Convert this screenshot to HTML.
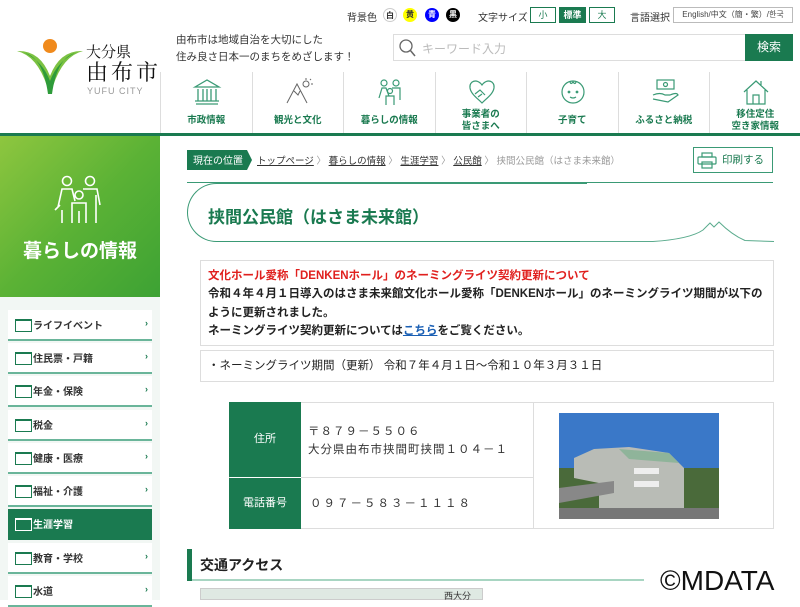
<!DOCTYPE html>
<html><head><meta charset="utf-8">
<style>
*{margin:0;padding:0;box-sizing:border-box}
body{width:800px;height:600px;overflow:hidden;position:relative;background:#fff;font-family:"Liberation Sans","Noto Sans CJK JP",sans-serif;color:#333}
.a{position:absolute}
.sm{font-size:10px;color:#333}
.circ{position:absolute;width:14px;height:14px;border-radius:50%;font-size:8px;line-height:14px;text-align:center;font-weight:bold}
.fbtn{position:absolute;top:7px;height:16px;border:1px solid #1a7a50;font-size:9px;line-height:14px;text-align:center;color:#1a7a50}
.nav{position:absolute;top:72px;height:61px;width:91.5px;border-left:1px solid #ddd;text-align:center}
.nav span{position:absolute;left:0;right:0;font-size:9.5px;font-weight:bold;color:#1a7a50;line-height:12px}
.nav svg{position:absolute;left:31px;top:6px}
.side{position:absolute;left:8px;width:144px;height:31px;background:#fff;border-bottom:2px solid #6ab59a;font-size:10px;font-weight:bold;color:#333}
.side .f{position:absolute;left:7px;top:9px;width:17px;height:13px;border:1px solid #1a7a50;border-top-width:2px}
.side .t{position:absolute;left:25px;top:7px}
.side .g{position:absolute;right:4px;top:8px;color:#1a7a50;font-size:9px}
.txt{font-size:11.5px;font-weight:bold;line-height:18.3px;color:#222}
</style></head><body>
<div class="a sm" style="left:347px;top:9px">背景色</div>
<div class="circ" style="left:383px;top:8px;border:1px solid #ccc;background:#fff">白</div>
<div class="circ" style="left:403px;top:8px;background:#ff0;color:#333">黄</div>
<div class="circ" style="left:425px;top:8px;background:#00f;color:#fff">青</div>
<div class="circ" style="left:446px;top:8px;background:#000;color:#fff">黒</div>
<div class="a sm" style="left:478px;top:9px">文字サイズ</div>
<div class="fbtn" style="left:530px;width:26px">小</div>
<div class="fbtn" style="left:559px;width:27px;background:#1a7a50;color:#fff;font-weight:bold">標準</div>
<div class="fbtn" style="left:589px;width:26px">大</div>
<div class="a sm" style="left:630px;top:9px">言語選択</div>
<div class="a" style="left:673px;top:7px;width:120px;height:16px;border:1px solid #bbb;font-size:8px;line-height:14px;text-align:center;color:#444">English/中文（簡・繁）/한국</div>
<svg class="a" style="left:15px;top:36px" width="70" height="62" viewBox="0 0 70 62">
<circle cx="35" cy="10" r="7" fill="#f08a1c"/>
<path d="M2 15 Q25 14 35 40 Q45 14 68 15 Q48 20 38 50 L32 50 Q22 20 2 15Z" fill="#7cc242"/>
<path d="M10 17 Q28 22 33 58 L37 58 Q42 22 60 17 Q42 26 35 45 Q28 26 10 17Z" fill="#2e9b3a"/>
</svg>
<div class="a" style="left:86px;top:43px;font-family:'Noto Serif CJK SC',serif;font-size:15px;line-height:17px;color:#111;white-space:nowrap">大分県</div>
<div class="a" style="left:86px;top:59px;font-family:'Noto Serif CJK SC',serif;font-size:22px;line-height:26px;letter-spacing:3px;color:#111;white-space:nowrap">由布市</div>
<div class="a" style="left:87px;top:86px;font-size:9px;color:#999;letter-spacing:1px">YUFU CITY</div>
<div class="a" style="left:176px;top:32px;font-size:10.5px;line-height:17px;color:#333">由布市は地域自治を大切にした<br>住み良さ日本一のまちをめざします！</div>
<div class="a" style="left:393px;top:34px;width:353px;height:27px;border:1px solid #ddd;border-right:none"></div>
<svg class="a" style="left:398px;top:38px" width="18" height="19"><circle cx="8" cy="8" r="6" fill="none" stroke="#666" stroke-width="1.3"/><path d="M12 12 L17 18" stroke="#666" stroke-width="1.5"/></svg>
<div class="a" style="left:422px;top:40px;font-size:12px;color:#bbb">キーワード入力</div>
<div class="a" style="left:745px;top:34px;width:48px;height:27px;background:#1a7a50;color:#fff;font-size:12px;line-height:27px;text-align:center">検索</div>
<div class="nav" style="left:160px"><svg width="30" height="28" viewBox="0 0 30 28" fill="none" stroke="#3a9a75" stroke-width="1.3"><path d="M3 9 L15 2 L27 9Z M4 26 H26 M6 11 V23 M11 11 V23 M15 11V23 M19 11 V23 M24 11 V23 M3 23 H27"/></svg><span style="top:43px">市政情報</span></div>
<div class="nav" style="left:251.5px"><svg width="30" height="28" viewBox="0 0 30 28" fill="none" stroke="#666" stroke-width="1"><path d="M3 25 L13 6 L23 25 M10 13 L14 17 L16 13"/><circle cx="22" cy="6" r="3"/><path d="M22 0V2 M27 6H29 M26 2L27 1"/></svg><span style="top:43px">観光と文化</span></div>
<div class="nav" style="left:343px"><svg width="30" height="28" viewBox="0 0 30 28" fill="none" stroke="#3a9a75" stroke-width="1.2"><circle cx="9" cy="5" r="3"/><circle cx="21" cy="5" r="3"/><circle cx="15" cy="13" r="2.5"/><path d="M4 20 L7 10 H11 L14 18 M17 10 H25 V22 M11 27 V18 H19 V27"/></svg><span style="top:43px">暮らしの情報</span></div>
<div class="nav" style="left:434.5px"><svg width="30" height="28" viewBox="0 0 30 28" fill="none" stroke="#3a9a75" stroke-width="1.2"><path d="M15 7 C10 0 2 3 3 10 C4 16 10 20 15 25 C20 20 26 16 27 10 C28 3 20 0 15 7Z M8 16 L13 12 L18 17 M11 19 L15 16"/></svg><span style="top:37px">事業者の<br>皆さまへ</span></div>
<div class="nav" style="left:526px"><svg width="30" height="28" viewBox="0 0 30 28" fill="none" stroke="#3a9a75" stroke-width="1.2"><circle cx="15" cy="14" r="11"/><path d="M12 4 Q13 7 15 4 Q17 7 18 4"/><circle cx="11" cy="14" r="0.8" fill="#3a9a75"/><circle cx="19" cy="14" r="0.8" fill="#3a9a75"/><path d="M12 19 Q15 21 18 19"/></svg><span style="top:43px">子育て</span></div>
<div class="nav" style="left:617.5px"><svg width="30" height="28" viewBox="0 0 30 28" fill="none" stroke="#3a9a75" stroke-width="1.2"><rect x="7" y="2" width="17" height="9"/><circle cx="15.5" cy="6.5" r="2"/><path d="M3 17 Q10 14 15 17 L20 17 Q27 14 28 17 L18 24 L3 21"/></svg><span style="top:43px">ふるさと納税</span></div>
<div class="nav" style="left:709px"><svg width="30" height="28" viewBox="0 0 30 28" fill="none" stroke="#3a9a75" stroke-width="1.2"><path d="M3 14 L15 3 L27 14 M6 12 V26 H24 V12 M12 26 V17 H18 V26 M20 3 V7"/></svg><span style="top:37px">移住定住<br>空き家情報</span></div>
<div class="a" style="left:0;top:133px;width:800px;height:3px;background:#1a7a50"></div>
<div class="a" style="left:0;top:136px;width:160px;height:161px;background:linear-gradient(135deg,#8ec63f,#5bb235 50%,#3da234)"></div>
<svg class="a" style="left:52px;top:175px" width="56" height="52" viewBox="0 0 56 52" fill="none" stroke="#fff" stroke-width="1.6"><circle cx="15" cy="6" r="4.5"/><circle cx="38" cy="6" r="4.5"/><circle cx="27" cy="20" r="4"/><path d="M6 32 L10 14 H20 L23 26 M3 35 L8 30 M10 35 V48 M31 14 H45 L48 30 M44 20 V48 M20 48 V28 H34 V48 M27 36 V48"/></svg>
<div class="a" style="left:0;top:236px;width:160px;text-align:center;color:#fff;font-size:19px;font-weight:bold">暮らしの情報</div>
<div class="a" style="left:0;top:297px;width:160px;height:303px;background:#f2f7f4"></div>
<div class="side" style="top:310px"><div class="f"></div><span class="t">ライフイベント</span><span class="g">›</span></div>
<div class="side" style="top:343px"><div class="f"></div><span class="t">住民票・戸籍</span><span class="g">›</span></div>
<div class="side" style="top:376px"><div class="f"></div><span class="t">年金・保険</span><span class="g">›</span></div>
<div class="side" style="top:410px"><div class="f"></div><span class="t">税金</span><span class="g">›</span></div>
<div class="side" style="top:443px"><div class="f"></div><span class="t">健康・医療</span><span class="g">›</span></div>
<div class="side" style="top:476px"><div class="f"></div><span class="t">福祉・介護</span><span class="g">›</span></div>
<div class="side" style="top:509px;background:#1a7a50;color:#fff;border-bottom-color:#1a7a50"><div class="f" style="border-color:#fff"></div><span class="t">生涯学習</span></div>
<div class="side" style="top:543px"><div class="f"></div><span class="t">教育・学校</span><span class="g">›</span></div>
<div class="side" style="top:576px"><div class="f"></div><span class="t">水道</span><span class="g">›</span></div>
<svg class="a" style="left:187px;top:150px" width="66" height="20"><path d="M0 0 H60 L65 10 L60 20 H0Z" fill="#1a7a50"/><text x="6" y="14" fill="#fff" font-size="10" font-family="Liberation Sans,Noto Sans CJK JP,sans-serif">現在の位置</text></svg>
<div class="a" style="left:257px;top:153px;font-size:9.5px;color:#333"><u>トップページ</u> <span style="color:#999">〉</span> <u>暮らしの情報</u> <span style="color:#999">〉</span> <u>生涯学習</u> <span style="color:#999">〉</span> <u>公民館</u> <span style="color:#999">〉 挟間公民館（はさま未来館）</span></div>
<div class="a" style="left:693px;top:147px;width:80px;height:26px;border:1px solid #3a9a75;font-size:10.5px;color:#1a7a50;line-height:24px;padding-left:28px">印刷する</div>
<svg class="a" style="left:697px;top:152px" width="20" height="17" fill="none" stroke="#3a9a75" stroke-width="1.2"><rect x="5" y="1" width="10" height="4"/><rect x="1" y="5" width="18" height="7" rx="1"/><rect x="5" y="10" width="10" height="6"/></svg>
<div class="a" style="left:187px;top:182px;width:586px;height:1px;background:#3a9a75"></div>
<div class="a" style="left:187px;top:183px;width:400px;height:59px;border:1px solid #3a9a75;border-right:none;border-radius:30px 0 0 30px"></div>
<svg class="a" style="left:580px;top:215px" width="194" height="30" fill="none" stroke="#5aab8d" stroke-width="1"><path d="M0 26.5 H73 Q110 24 123 15 L130 8 L134 12 L139 7 Q152 20 165 25.5 L194 26.5"/></svg>
<div class="a" style="left:208px;top:203px;font-size:17px;font-weight:bold;color:#1a7a50">挟間公民館（はさま未来館）</div>
<div class="a txt" style="left:200px;top:260px;width:574px;height:86px;border:1px solid #ddd;padding:6px 7px">
<span style="color:#e0201e">文化ホール愛称「DENKENホール」のネーミングライツ契約更新について</span><br>令和４年４月１日導入のはさま未来館文化ホール愛称「DENKENホール」のネーミングライツ期間が以下のように更新されました。<br>ネーミングライツ契約更新については<span style="color:#1a5fb4;text-decoration:underline">こちら</span>をご覧ください。</div>
<div class="a txt" style="left:200px;top:350px;width:574px;height:32px;border:1px solid #ddd;padding:6px 7px;font-weight:normal;color:#222">・ネーミングライツ期間（更新） 令和７年４月１日～令和１０年３月３１日</div>
<div class="a" style="left:229px;top:402px;width:545px;height:127px;border:1px solid #ddd"></div>
<div class="a" style="left:229px;top:402px;width:72px;height:75px;background:#1a7a50;color:#fff;font-size:11px;line-height:75px;text-align:center">住所</div>
<div class="a" style="left:229px;top:478px;width:72px;height:51px;background:#1a7a50;color:#fff;font-size:11px;line-height:51px;text-align:center">電話番号</div>
<div class="a" style="left:301px;top:477px;width:232px;height:1px;background:#ddd"></div>
<div class="a" style="left:533px;top:402px;width:1px;height:127px;background:#ddd"></div>
<div class="a" style="left:308px;top:423px;font-size:11.5px;line-height:18px;color:#333;letter-spacing:1px">〒８７９－５５０６<br>大分県由布市挟間町挟間１０４－１</div>
<div class="a" style="left:310px;top:495px;font-size:11.5px;color:#333;letter-spacing:2px">０９７－５８３－１１１８</div>
<svg class="a" style="left:559px;top:413px" width="160" height="106" viewBox="0 0 160 106">
<rect width="160" height="106" fill="#3a78c8"/>
<rect y="55" width="160" height="51" fill="#4a6a3a"/>
<path d="M15 45 L35 36 L70 34 L110 40 L125 55 V95 H40 V70 L15 65Z" fill="#b9bcb6"/>
<path d="M60 36 L110 40 L120 50 L70 46Z" fill="#8fb49a"/>
<path d="M0 75 L55 68 L55 80 L0 90Z" fill="#888"/>
<rect x="75" y="55" width="25" height="6" fill="#eee"/><rect x="75" y="68" width="25" height="6" fill="#eee"/>
<rect x="0" y="95" width="160" height="11" fill="#777"/>
</svg>
<div class="a" style="left:187px;top:549px;width:5px;height:32px;background:#1a7a50"></div>
<div class="a" style="left:192px;top:579px;width:452px;height:2px;background:#a8d5c2"></div>
<div class="a" style="left:200px;top:555px;font-size:14px;font-weight:bold;color:#222">交通アクセス</div>
<div class="a" style="left:200px;top:588px;width:283px;height:12px;background:#dfe9e3;border:1px solid #ccc"></div>
<div class="a" style="left:444px;top:589px;font-size:9px;color:#333">西大分</div>
<div class="a" style="left:660px;top:565px;font-size:28px;color:#111;background:rgba(255,255,255,0.6)">©MDATA</div>
</body></html>
